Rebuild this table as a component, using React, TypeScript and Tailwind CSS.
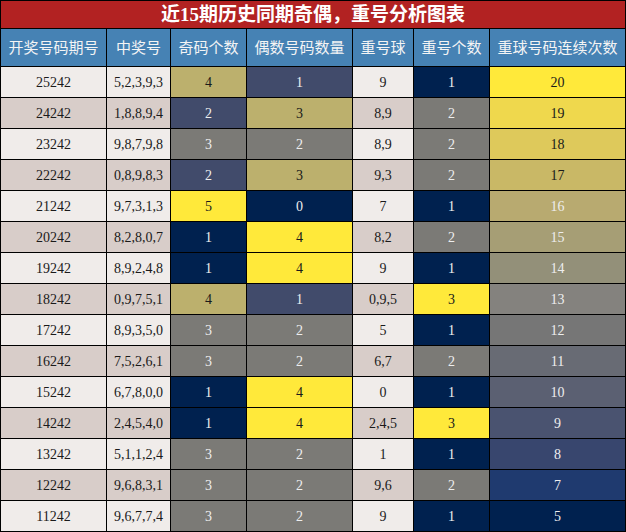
import React from "react";

type Cell = { v: string; bg: string; dark: boolean };

const LIGHT = "bg-[#f0ecea]";
const DARKROW = "bg-[#d8cdc9]";

const oddEven: Record<string, { bg: string; dark: boolean }> = {
  "0": { bg: "bg-[#00214f]", dark: false },
  "1": { bg: "bg-[#00214f]", dark: false },
  "2": { bg: "bg-[#7b7a76]", dark: false },
  "3": { bg: "bg-[#bcb06d]", dark: true },
  "4": { bg: "bg-[#bcb06d]", dark: true },
  "5": { bg: "bg-[#ffe93a]", dark: true },
};

// odd column mapping
const oddMap: Record<string, { bg: string; dark: boolean }> = {
  "1": { bg: "bg-[#00214f]", dark: false },
  "2": { bg: "bg-[#414b6b]", dark: false },
  "3": { bg: "bg-[#7b7a76]", dark: false },
  "4": { bg: "bg-[#bcb06d]", dark: true },
  "5": { bg: "bg-[#ffe93a]", dark: true },
};
const evenMap: Record<string, { bg: string; dark: boolean }> = {
  "0": { bg: "bg-[#00214f]", dark: false },
  "1": { bg: "bg-[#414b6b]", dark: false },
  "2": { bg: "bg-[#7b7a76]", dark: false },
  "3": { bg: "bg-[#bcb06d]", dark: true },
  "4": { bg: "bg-[#ffe93a]", dark: true },
};
const repMap: Record<string, { bg: string; dark: boolean }> = {
  "1": { bg: "bg-[#00214f]", dark: false },
  "2": { bg: "bg-[#7b7a76]", dark: false },
  "3": { bg: "bg-[#ffe93a]", dark: true },
};
const streakMap: Record<string, { bg: string; dark: boolean }> = {
  "20": { bg: "bg-[#ffe93a]", dark: true },
  "19": { bg: "bg-[#efd84d]", dark: true },
  "18": { bg: "bg-[#dec95b]", dark: true },
  "17": { bg: "bg-[#c9b866]", dark: true },
  "16": { bg: "bg-[#b8aa70]", dark: false },
  "15": { bg: "bg-[#a69e75]", dark: false },
  "14": { bg: "bg-[#939079]", dark: false },
  "13": { bg: "bg-[#84827e]", dark: false },
  "12": { bg: "bg-[#767676]", dark: false },
  "11": { bg: "bg-[#686b74]", dark: false },
  "10": { bg: "bg-[#5b6072]", dark: false },
  "9": { bg: "bg-[#4a5370]", dark: false },
  "8": { bg: "bg-[#38466e]", dark: false },
  "7": { bg: "bg-[#1f3a6f]", dark: false },
  "5": { bg: "bg-[#00214f]", dark: false },
};

void oddEven;

const rows: [string, string, string, string, string, string, string][] = [
  ["25242", "5,2,3,9,3", "4", "1", "9", "1", "20"],
  ["24242", "1,8,8,9,4", "2", "3", "8,9", "2", "19"],
  ["23242", "9,8,7,9,8", "3", "2", "8,9", "2", "18"],
  ["22242", "0,8,9,8,3", "2", "3", "9,3", "2", "17"],
  ["21242", "9,7,3,1,3", "5", "0", "7", "1", "16"],
  ["20242", "8,2,8,0,7", "1", "4", "8,2", "2", "15"],
  ["19242", "8,9,2,4,8", "1", "4", "9", "1", "14"],
  ["18242", "0,9,7,5,1", "4", "1", "0,9,5", "3", "13"],
  ["17242", "8,9,3,5,0", "3", "2", "5", "1", "12"],
  ["16242", "7,5,2,6,1", "3", "2", "6,7", "2", "11"],
  ["15242", "6,7,8,0,0", "1", "4", "0", "1", "10"],
  ["14242", "2,4,5,4,0", "1", "4", "2,4,5", "3", "9"],
  ["13242", "5,1,1,2,4", "3", "2", "1", "1", "8"],
  ["12242", "9,6,8,3,1", "3", "2", "9,6", "2", "7"],
  ["11242", "9,6,7,7,4", "3", "2", "9", "1", "5"],
];

const headers = ["开奖号码期号", "中奖号", "奇码个数", "偶数号码数量", "重号球", "重号个数", "重球号码连续次数"];

const font = { fontFamily: '"Liberation Serif", "Noto Sans CJK SC", serif' };

function C({ c }: { c: Cell }) {
  return (
    <div
      className={`${c.bg} ${c.dark ? "text-[#1a1a1a]" : "text-[#eeeeee]"} flex items-center justify-center text-[14px] h-[30px]`}
    >
      {c.v}
    </div>
  );
}

export default function App() {
  return (
    <div
      className="w-[626px] h-[532px] bg-black p-px flex flex-col gap-px"
      style={font}
    >
      <div className="h-[27px] bg-[#b22222] flex items-center justify-center text-white font-bold text-[19px] leading-none">
        近15期历史同期奇偶，重号分析图表
      </div>
      <div className="grid grid-cols-[105px_63px_75px_105px_60px_75px_135px] gap-px">
        {headers.map((h) => (
          <div
            key={h}
            className="h-[37px] bg-[#4682b4] text-[#f4f4f4] flex items-center justify-center text-[15px]"
            style={{ fontFamily: '"Noto Sans CJK SC", sans-serif' }}
          >
            {h}
          </div>
        ))}
        {rows.map((r, i) => {
          const base = i % 2 === 0 ? LIGHT : DARKROW;
          const cells: Cell[] = [
            { v: r[0], bg: base, dark: true },
            { v: r[1], bg: base, dark: true },
            { v: r[2], ...oddMap[r[2]] },
            { v: r[3], ...evenMap[r[3]] },
            { v: r[4], bg: base, dark: true },
            { v: r[5], ...repMap[r[5]] },
            { v: r[6], ...streakMap[r[6]] },
          ];
          return (
            <React.Fragment key={r[0]}>
              {cells.map((c, j) => (
                <C key={j} c={c} />
              ))}
            </React.Fragment>
          );
        })}
      </div>
    </div>
  );
}
